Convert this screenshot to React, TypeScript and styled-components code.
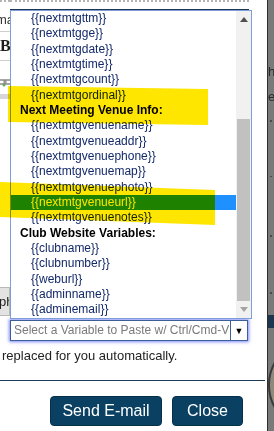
import React from 'react';
import styled, { createGlobalStyle } from 'styled-components';

interface Row {
  label: string;
  group?: boolean;
}

const rows: Row[] = [
  { label: '{{nextmtgttm}}' },
  { label: '{{nextmtgge}}' },
  { label: '{{nextmtgdate}}' },
  { label: '{{nextmtgtime}}' },
  { label: '{{nextmtgcount}}' },
  { label: '{{nextmtgordinal}}' },
  { label: 'Next Meeting Venue Info:', group: true },
  { label: '{{nextmtgvenuename}}' },
  { label: '{{nextmtgvenueaddr}}' },
  { label: '{{nextmtgvenuephone}}' },
  { label: '{{nextmtgvenuemap}}' },
  { label: '{{nextmtgvenuephoto}}' },
  { label: '{{nextmtgvenueurl}}' },
  { label: '{{nextmtgvenuenotes}}' },
  { label: 'Club Website Variables:', group: true },
  { label: '{{clubname}}' },
  { label: '{{clubnumber}}' },
  { label: '{{weburl}}' },
  { label: '{{adminname}}' },
  { label: '{{adminemail}}' },
];

const SELECTED = '{{nextmtgvenueurl}}';

const GlobalStyle = createGlobalStyle`
  html, body {
    margin: 0;
    padding: 0;
    width: 274px;
    height: 431px;
    overflow: hidden;
    background: #fff;
  }
  body {
    font-family: "Liberation Sans", Arial, sans-serif;
  }
`;

const Screen = styled.div`
  position: relative;
  display: flex;
  width: 274px;
  height: 431px;
  overflow: hidden;
  isolation: isolate;
`;

const Dialog = styled.div`
  position: relative;
  flex: none;
  width: 267px;
  display: flex;
  flex-direction: column;
  background: #fff;
  border-right: 1px solid #2f2f2f;
`;

const EditorArea = styled.div`
  height: 318px;
  display: grid;
  grid-template-columns: 10px 1fr 16px;
`;

const LeftStrip = styled.div`
  display: flex;
  flex-direction: column;
  overflow: hidden;
  border-top: 2px dotted #b4b4b4;
`;

const FieldLabel = styled.span`
  margin: 11px 0 0 -4px;
  font-size: 13px;
  line-height: 14px;
  color: #333;
  white-space: nowrap;
`;

const ThinLine = styled.div<{ $top: number }>`
  margin-top: ${(p) => p.$top}px;
  border-top: 1px solid #cfcfcf;
`;

const BoldGlyph = styled.span`
  margin-top: 6px;
  font-family: "Liberation Serif", "Times New Roman", serif;
  font-weight: bold;
  font-size: 16px;
  line-height: 16px;
  color: #1e1e1e;
`;

const LinkGlyph = styled.svg`
  margin-top: 16px;
  flex: none;
`;

const GrayBand = styled.div`
  margin-top: 7px;
  height: 5px;
  background: #d6d6d6;
`;

const Spacer = styled.div`
  flex: 1;
`;

const GrayButton = styled.div`
  height: 27px;
  margin: 0 0 2px -1px;
  display: flex;
  align-items: center;
  background: #e3e3e3;
  border: 1px solid #b9b9b9;
  border-left: none;
  font-size: 13px;
  color: #222;
  white-space: nowrap;
  overflow: hidden;
`;

const CenterStrip = styled.div`
  border-top: 2px dotted #b4b4b4;
  margin-right: 2px;
`;

const FrameLine = styled.div`
  margin-top: 7px;
  border-top: 1px solid #1e3656;
`;

const RightStrip = styled.div``;

const ListBox = styled.div`
  position: absolute;
  left: 10px;
  top: 10px;
  width: 242px;
  height: 309px;
  box-sizing: border-box;
  display: flex;
  background: #fff;
  border: 1px solid #7e9ed6;
  z-index: 1;
`;

const Options = styled.div`
  flex: 1;
  overflow: hidden;
  display: flex;
  flex-direction: column;
`;

const Option = styled.div<{ $group?: boolean; $selected?: boolean }>`
  flex: none;
  height: 15.33px;
  line-height: 15.33px;
  font-size: 12px;
  white-space: nowrap;
  padding-left: ${(p) => (p.$group ? 9 : 20)}px;
  font-weight: ${(p) => (p.$group ? 'bold' : 'normal')};
  color: ${(p) => (p.$selected ? '#fff' : p.$group ? '#000' : '#13296a')};
  background: ${(p) => (p.$selected ? '#1e90ff' : 'transparent')};
`;

const Scrollbar = styled.div`
  flex: none;
  width: 15px;
  display: flex;
  flex-direction: column;
  background: #f1f1f1;
`;

const ArrowButton = styled.div`
  height: 17px;
  display: flex;
  align-items: center;
  justify-content: center;
`;

const Thumb = styled.div`
  height: 182px;
  margin: 0 1px;
  background: #c1c1c1;
`;

const SelectBox = styled.div`
  margin: 2px 0 0 10px;
  width: 238px;
  height: 21px;
  box-sizing: border-box;
  display: flex;
  background: #fff;
  border: 1px solid #3d5f98;
  box-shadow: 0 0 3px 1px rgba(86, 96, 255, 0.75);
`;

const Placeholder = styled.div`
  flex: 1;
  padding-left: 3px;
  font-size: 12px;
  line-height: 19px;
  color: #7a7a7a;
  white-space: nowrap;
  overflow: hidden;
`;

const Caret = styled.div`
  width: 16px;
  display: flex;
  align-items: center;
  justify-content: center;
  border-left: 1px solid #3d5f98;
  font-size: 9px;
  color: #000;
`;

const Hint = styled.p`
  margin: 7px 0 0;
  padding-left: 2px;
  font-size: 13px;
  line-height: 15px;
  color: #222;
  white-space: nowrap;
`;

const Rule = styled.div`
  margin-top: 17px;
  width: 265px;
  border-top: 1px solid #1f3b58;
`;

const ButtonRow = styled.div`
  margin-top: 15px;
  padding-left: 50px;
  display: flex;
  gap: 10px;
`;

const ActionButton = styled.button<{ $width: number }>`
  width: ${(p) => p.$width}px;
  height: 30px;
  padding: 0;
  border: 1px solid #05304a;
  border-radius: 4px;
  background: #0a4163;
  color: #fff;
  font-family: "Liberation Sans", Arial, sans-serif;
  font-size: 16px;
`;

const Backdrop = styled.div`
  flex: 1;
  display: flex;
  flex-direction: column;
  background: #7a7a7a;
  overflow: hidden;
`;

const BackdropText = styled.span<{ $top: number }>`
  margin-top: ${(p) => p.$top}px;
  font-size: 13px;
  line-height: 12px;
  color: #2a2a2a;
  white-space: nowrap;
`;

const Tick = styled.div<{ $top: number }>`
  margin: ${(p) => p.$top}px 0 0 2px;
  width: 2px;
  height: 2px;
  background: #4a4a4a;
`;

const NavyBand = styled.div`
  margin-top: 21px;
  height: 16px;
  background: #1c3650;
`;

const Seal = styled.svg`
  margin-top: 11px;
  flex: none;
`;

const Highlighter = styled.svg`
  position: absolute;
  left: 0;
  top: 0;
  z-index: 2;
  mix-blend-mode: multiply;
  pointer-events: none;
`;

export default function App() {
  return (
    <>
      <GlobalStyle />
      <Screen>
        <Dialog>
          <EditorArea>
            <LeftStrip>
              <FieldLabel>ma</FieldLabel>
              <ThinLine $top={4} />
              <BoldGlyph>B</BoldGlyph>
              <ThinLine $top={6} />
              <LinkGlyph width="10" height="10" viewBox="0 0 10 10">
                <rect x="-2" y="3" width="8" height="4" rx="2" fill="none" stroke="#8a8a8a" strokeWidth="1.3" />
                <rect x="4" y="3" width="8" height="4" rx="2" fill="none" stroke="#8a8a8a" strokeWidth="1.3" />
                <circle cx="4" cy="8" r="1.5" fill="#6aa84f" />
              </LinkGlyph>
              <GrayBand />
              <Spacer />
              <GrayButton>ph</GrayButton>
            </LeftStrip>
            <CenterStrip>
              <FrameLine />
            </CenterStrip>
            <RightStrip />
          </EditorArea>

          <ListBox>
            <Options>
              {rows.map((r) => (
                <Option key={r.label} $group={r.group} $selected={r.label === SELECTED}>
                  {r.label}
                </Option>
              ))}
            </Options>
            <Scrollbar>
              <ArrowButton>
                <svg width="8" height="5" viewBox="0 0 8 5">
                  <path d="M0 5 L4 0 L8 5 Z" fill="#505050" />
                </svg>
              </ArrowButton>
              <Spacer />
              <Thumb />
              <ArrowButton>
                <svg width="8" height="5" viewBox="0 0 8 5">
                  <path d="M0 0 L8 0 L4 5 Z" fill="#a3a3a3" />
                </svg>
              </ArrowButton>
            </Scrollbar>
          </ListBox>

          <SelectBox>
            <Placeholder>Select a Variable to Paste w/ Ctrl/Cmd-V</Placeholder>
            <Caret>▼</Caret>
          </SelectBox>
          <Hint>replaced for you automatically.</Hint>
          <Rule />
          <ButtonRow>
            <ActionButton $width={112}>Send E-mail</ActionButton>
            <ActionButton $width={71}>Close</ActionButton>
          </ButtonRow>
        </Dialog>

        <Backdrop>
          <BackdropText $top={66}>h</BackdropText>
          <BackdropText $top={13}>e</BackdropText>
          <Tick $top={17} />
          <Tick $top={54} />
          <Tick $top={58} />
          <Tick $top={55} />
          <NavyBand />
          <Seal width="6" height="92" viewBox="0 0 6 92">
            <circle cx="46" cy="46" r="45" fill="#8d8a7c" stroke="#3a3a3a" strokeWidth="2" />
            <circle cx="46" cy="46" r="38" fill="#5f7289" stroke="#3a3a3a" strokeWidth="1" />
          </Seal>
        </Backdrop>

        <Highlighter width="274" height="431" viewBox="0 0 274 431">
          <polygon points="8,86 208,89 208,125 8,122" fill="#ffe600" />
          <polygon points="0,182 215,190 215,225 0,217" fill="#ffe600" />
        </Highlighter>
      </Screen>
    </>
  );
}
